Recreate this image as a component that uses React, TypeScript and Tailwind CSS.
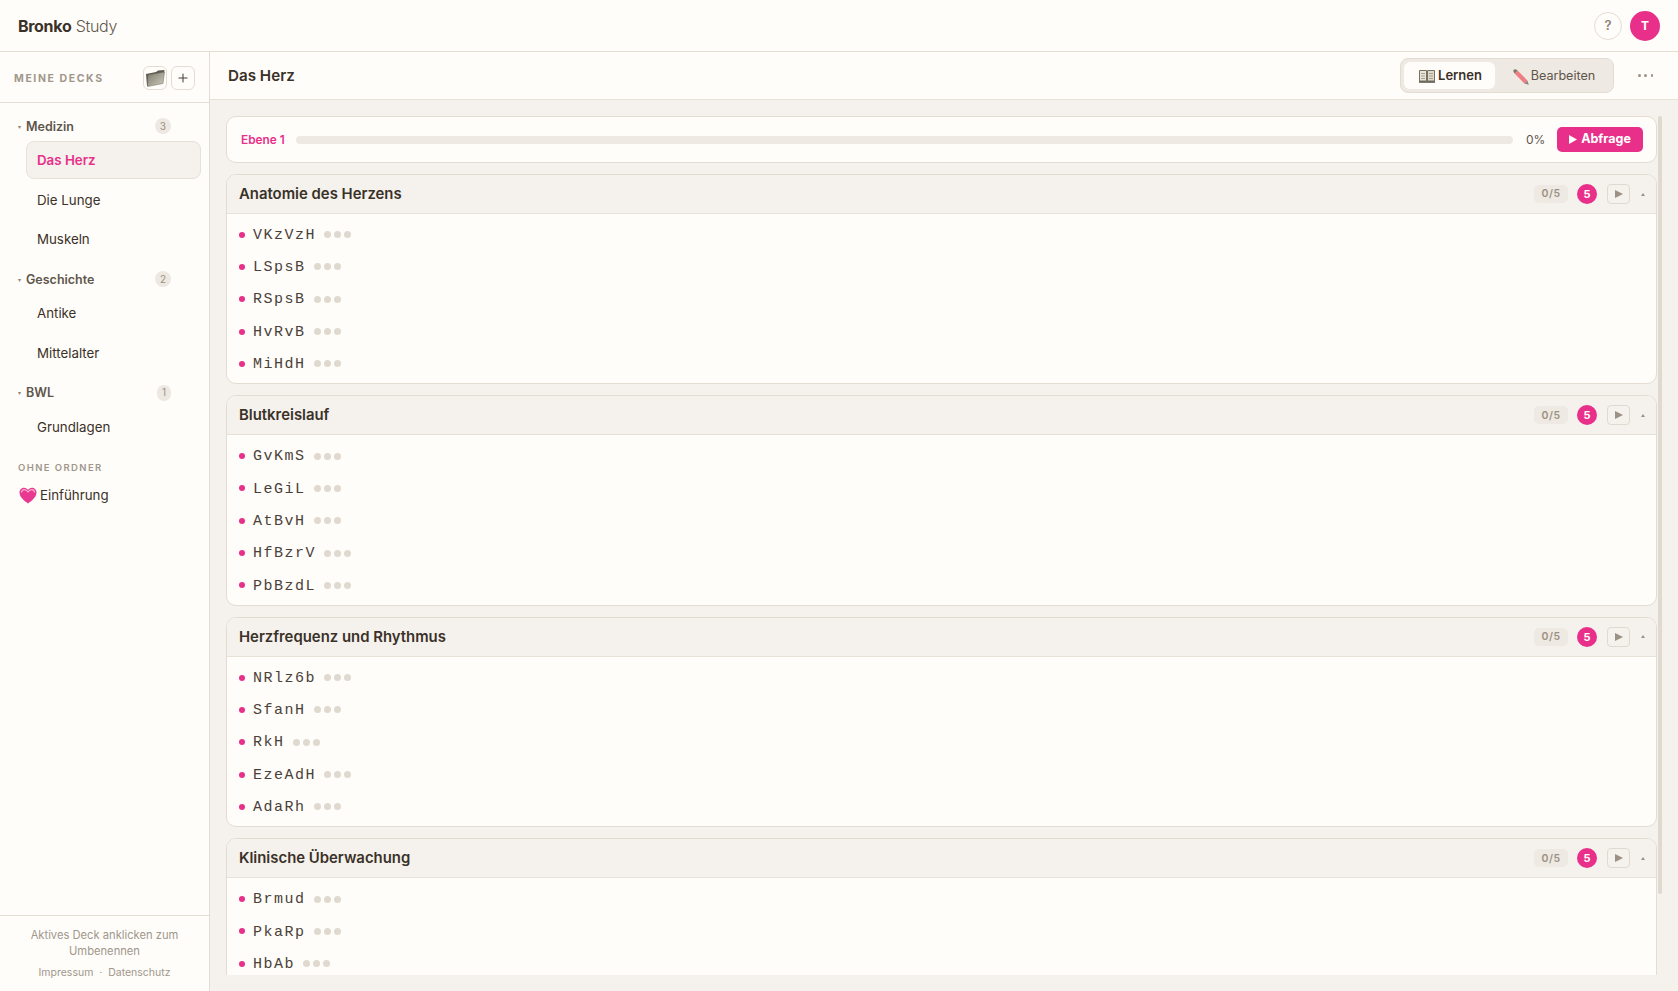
import { Plus } from 'lucide-react';

const sans = "font-['Inter','Liberation_Sans',sans-serif]";
const dots = 'bg-[#f5f1ec] bg-[radial-gradient(#ebe5dd_0.6px,transparent_0.7px)] bg-[length:4px_4px]';

const sections = [
  { title: 'Anatomie des Herzens', cards: ['VKzVzH', 'LSpsB', 'RSpsB', 'HvRvB', 'MiHdH'] },
  { title: 'Blutkreislauf', cards: ['GvKmS', 'LeGiL', 'AtBvH', 'HfBzrV', 'PbBzdL'] },
  { title: 'Herzfrequenz und Rhythmus', cards: ['NRlz6b', 'SfanH', 'RkH', 'EzeAdH', 'AdaRh'] },
  { title: 'Klinische Überwachung', cards: ['Brmud', 'PkaRp', 'HbAb'] },
];

function FolderIcon() {
  return (
    <svg width="21" height="19" viewBox="0 0 21 19">
      <defs>
        <linearGradient id="folderFront" x1="0" y1="0" x2="1" y2="1">
          <stop offset="0" stopColor="#7d7a6c" />
          <stop offset="1" stopColor="#cfcdc0" />
        </linearGradient>
      </defs>
      <path d="M1 5 L11 3 L13 1.5 L19.5 1 L19 4 L3 17 L2 17 Z" fill="#5f5b4e" />
      <path d="M3 6 L19.5 3 L18 14.5 L2.5 17.5 Z" fill="url(#folderFront)" stroke="#6f6b5c" strokeWidth="0.5" />
    </svg>
  );
}

function BookIcon() {
  return (
    <svg width="16" height="14" viewBox="0 0 16 14">
      <path d="M0.5 1.5 H7.5 V12 H0.5 Z" fill="#e9e5da" stroke="#77705f" strokeWidth="1" />
      <path d="M8.5 1.5 H15.5 V12 H8.5 Z" fill="#dfdacd" stroke="#77705f" strokeWidth="1" />
      <path d="M2 4.5 H6 M2 7 H6 M2 9.5 H6 M10 4.5 H14 M10 7 H14 M10 9.5 H14" stroke="#a69f90" strokeWidth="1" />
      <path d="M0 13 H16" stroke="#4a4438" strokeWidth="1.4" />
    </svg>
  );
}

function PencilIcon() {
  return (
    <svg width="16" height="16" viewBox="0 0 16 16">
      <path d="M4.6 1.6 L14.4 11.4 L11.4 14.4 L1.6 4.6 Z" fill="#ee7d84" />
      <path d="M1.6 4.6 L4.6 1.6 L3 0.6 Q1.6 0 0.8 0.8 Q0 1.6 0.6 3 Z" fill="#7d776a" />
      <path d="M14.4 11.4 L15.8 15.8 L11.4 14.4 Z" fill="#8b8578" />
    </svg>
  );
}

function HeartIcon() {
  return (
    <svg width="18" height="17" viewBox="0 0 18 17">
      <path d="M9 16.5 C5 13.5 0.5 10 0.5 5.5 C0.5 2.5 2.8 0.8 5 0.8 C6.8 0.8 8.2 1.8 9 3 C9.8 1.8 11.2 0.8 13 0.8 C15.2 0.8 17.5 2.5 17.5 5.5 C17.5 10 13 13.5 9 16.5 Z" fill="#e8388f" />
      <path d="M2.5 5.5 C2.5 3.6 3.8 2.6 5.2 2.6 C6.8 2.6 8.2 3.8 9 5 C9.8 3.8 11.2 2.6 12.8 2.6 C14.2 2.6 15.5 3.6 15.5 5.5" fill="none" stroke="#fbb6d3" strokeWidth="1.2" />
    </svg>
  );
}

function Triangle({ w, h, color }: { w: number; h: number; color: string }) {
  return (
    <svg width={w} height={h} viewBox="0 0 10 10" preserveAspectRatio="none">
      <path d="M0 0 L10 5 L0 10 Z" fill={color} />
    </svg>
  );
}

function Group({ name, count, decks }: { name: string; count: number; decks: { name: string; active?: boolean }[] }) {
  return (
    <div className="mb-[9px]">
      <div className="flex h-[24px] items-center pl-[18px] pr-[38px]">
        <span className="mr-[5px] text-[6px] text-[#8c8378]">▾</span>
        <span className="flex-1 pt-[2px] text-[12.5px] font-semibold text-[#5e554b]">{name}</span>
        <span className="flex h-[16px] items-center justify-center rounded-full bg-[#ede8e1] px-[5px] text-[10px] text-[#9b9184]">{count}</span>
      </div>
      <div className="mt-[3px] flex flex-col gap-[1.5px] pl-[26px] pr-[8px]">
        {decks.map((d) =>
          d.active ? (
            <div key={d.name} className={`flex h-[38px] items-center rounded-[8px] border border-[#e8e1d8] pl-[10px] pt-[2px] text-[13.3px] font-semibold text-[#e8308a] ${dots}`}>{d.name}</div>
          ) : (
            <div key={d.name} className="flex h-[38px] items-center border border-transparent pl-[10px] pt-[2px] text-[13.3px] text-[#3a3128]">{d.name}</div>
          ),
        )}
      </div>
    </div>
  );
}

function Section({ title, cards }: { title: string; cards: string[] }) {
  return (
    <div className="mb-[11px] overflow-hidden rounded-[10px] border border-[#e3dcd2] bg-[#fffdfa]">
      <div className="flex h-[39px] items-center border-b border-[#e8e1d8] bg-[#f5f1ec] pl-[12px] pr-[11px]">
        <span className="flex-1 text-[14.9px] font-semibold text-[#3a3128]">{title}</span>
        <span className="flex h-[18px] w-[34px] items-center justify-center rounded-[5px] bg-[#eee9e2] text-[10.5px] font-semibold tracking-[0.5px] text-[#9b9184]">0/5</span>
        <span className="ml-[9px] flex h-[20px] w-[20px] items-center justify-center rounded-full bg-[#e8308a] text-[11px] font-bold text-white">5</span>
        <span className="ml-[10px] flex h-[20px] w-[23px] items-center justify-center rounded-[4px] border border-[#e0d9cf]">
          <Triangle w={8} h={8} color="#9b9184" />
        </span>
        <span className="ml-[11px] flex w-[4px] justify-center">
          <svg width="4" height="3" viewBox="0 0 4 3"><path d="M2 0 L4 3 L0 3 Z" fill="#9b9184" /></svg>
        </span>
      </div>
      <div className="flex flex-col pb-[3.5px] pt-[4.5px]">
        {cards.map((c) => (
          <div key={c} className="flex h-[32.3px] items-center pl-[12px]">
            <span className="h-[6px] w-[6px] rounded-full bg-[#e8308a]" />
            <span className="ml-[8px] mt-[3px] font-['Liberation_Mono',monospace] text-[15px] tracking-[1.5px] text-[#4a4138]">{c}</span>
            <span className="ml-[8px] flex gap-[3px]">
              <span className="h-[7px] w-[7px] rounded-full bg-[#e0d9cf]" />
              <span className="h-[7px] w-[7px] rounded-full bg-[#e0d9cf]" />
              <span className="h-[7px] w-[7px] rounded-full bg-[#e0d9cf]" />
            </span>
          </div>
        ))}
      </div>
    </div>
  );
}

export default function App() {
  return (
    <div className={`flex h-[991px] w-[1678px] flex-col overflow-hidden bg-[#fffdfa] ${sans}`}>
      <header className="flex h-[52px] shrink-0 items-center justify-between border-b border-[#e3dcd2] pl-[18px] pr-[18px]">
        <div className="text-[16px] tracking-[-0.3px] text-[#3a3128]">
          <span className="font-bold">Bronko</span> <span className="font-light text-[#5e554b]">Study</span>
        </div>
        <div className="flex items-center gap-[8px]">
          <span className="flex h-[28px] w-[28px] items-center justify-center rounded-full border border-[#e3dcd2] text-[13px] font-semibold text-[#8c8378]">?</span>
          <span className="flex h-[30px] w-[30px] items-center justify-center rounded-full bg-[#e8308a] text-[12px] font-bold text-white">T</span>
        </div>
      </header>

      <div className="flex min-h-0 flex-1">
        <aside className="flex w-[210px] shrink-0 flex-col border-r border-[#e3dcd2]">
          <div className="flex h-[51px] shrink-0 items-center border-b border-[#e3dcd2] pl-[14px] pr-[14px] pt-[2px]">
            <span className="mt-[1px] flex-1 text-[10.5px] font-bold tracking-[1.6px] text-[#a0978b]">MEINE DECKS</span>
            <span className="flex h-[24px] w-[24px] items-center justify-center rounded-[6px] border border-[#e3dcd2]"><FolderIcon /></span>
            <span className="ml-[4px] flex h-[24px] w-[24px] items-center justify-center rounded-[6px] border border-[#e3dcd2] text-[#4a4138]"><Plus size={14} strokeWidth={1.8} /></span>
          </div>
          <div className="flex-1 pt-[11px]">
            <Group name="Medizin" count={3} decks={[{ name: 'Das Herz', active: true }, { name: 'Die Lunge' }, { name: 'Muskeln' }]} />
            <Group name="Geschichte" count={2} decks={[{ name: 'Antike' }, { name: 'Mittelalter' }]} />
            <Group name="BWL" count={1} decks={[{ name: 'Grundlagen' }]} />
            <div className="mt-[15.5px] pl-[18px] text-[9.5px] font-semibold leading-[14px] tracking-[1.4px] text-[#a0978b]">OHNE ORDNER</div>
            <div className="mt-[10px] flex items-center gap-[3px] pl-[19px] text-[13.3px] leading-[20px] text-[#3a3128]"><HeartIcon /> Einführung</div>
          </div>
          <div className="flex h-[76px] shrink-0 flex-col items-center border-t border-[#e3dcd2] pt-[11px] text-center">
            <div className="w-[170px] text-[11.2px] leading-[16px] text-[#a0978b]">Aktives Deck anklicken zum Umbenennen</div>
            <div className="mt-[6px] text-[10.5px] text-[#a0978b]">Impressum &nbsp;·&nbsp; Datenschutz</div>
          </div>
        </aside>

        <main className="flex min-w-0 flex-1 flex-col">
          <div className="flex h-[48px] shrink-0 items-center border-b border-[#e8e1d8] pl-[18px] pr-[25px]">
            <h1 className="mt-[2px] flex-1 text-[15.2px] font-semibold text-[#3a3128]">Das Herz</h1>
            <div className="flex h-[35px] items-center rounded-[8px] border border-[#e3dcd2] bg-[#eee9e2] px-[3px]">
              <span className="flex h-[27px] w-[91px] items-center justify-center gap-[3px] rounded-[6px] bg-[#fffdfa] pl-[2px] text-[13px] font-semibold text-[#3a3128]"><BookIcon /> Lernen</span>
              <span className="flex h-[27px] w-[115px] items-center justify-center gap-[2px] pl-[3px] pt-[2px] text-[12.6px] text-[#5e554b]"><PencilIcon /> Bearbeiten</span>
            </div>
            <span className="ml-[24px] flex w-[15px] justify-between">
              <span className="h-[2.5px] w-[2.5px] rounded-full bg-[#9b9184]" />
              <span className="h-[2.5px] w-[2.5px] rounded-full bg-[#9b9184]" />
              <span className="h-[2.5px] w-[2.5px] rounded-full bg-[#9b9184]" />
            </span>
          </div>

          <div className={`flex min-h-0 flex-1 pb-[16px] pl-[16px] pr-[16px] pt-[16px] ${dots}`}>
            <div className="min-w-0 flex-1 overflow-hidden">
              <div className="mb-[11px] flex h-[47px] items-center rounded-[10px] border border-[#e3dcd2] bg-[#fffdfa] pl-[14px] pr-[13px]">
                <span className="mt-[3px] text-[11.8px] font-semibold text-[#e8308a]">Ebene 1</span>
                <div className="ml-[11px] h-[8px] flex-1 rounded-full bg-[#eee9e2]" />
                <span className="ml-[13px] w-[19px] text-[12px] text-[#5e554b]">0%</span>
                <span className="ml-[12px] flex h-[25px] w-[86px] items-center justify-center gap-[4px] rounded-[5px] bg-[#e8308a] text-[12.5px] font-bold text-white">
                  <Triangle w={8} h={9} color="#fff" /> Abfrage
                </span>
              </div>
              {sections.map((s) => (
                <Section key={s.title} title={s.title} cards={s.cards} />
              ))}
            </div>
            <div className="ml-[1px] w-[4px] shrink-0">
              <div className="h-[778px] w-[4px] rounded-full bg-[#e0d9cf]" />
            </div>
          </div>
        </main>
      </div>
    </div>
  );
}
